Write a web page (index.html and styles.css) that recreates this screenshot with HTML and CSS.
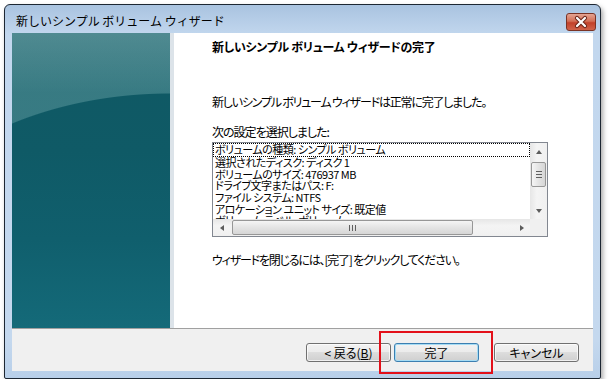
FILE: index.html
```html
<!DOCTYPE html>
<html lang="ja">
<head>
    <meta charset="UTF-8">
    <meta name="viewport" content="width=device-width, initial-scale=1.0">
    <title>新しいシンプル ボリューム ウィザード</title>
    <link rel="stylesheet" href="styles.css">
</head>
<body>
    <div class="window">
        <div class="titlebar">
            <span class="title">新しいシンプル ボリューム ウィザード</span>
            <div class="close">
                <svg width="28" height="16" viewBox="0 0 28 16">
                    <path d="M10 4 L18 12 M18 4 L10 12" stroke="#6b2418" stroke-width="4.2" stroke-linecap="round"/>
                    <path d="M10 4 L18 12 M18 4 L10 12" stroke="#fff" stroke-width="2.2" stroke-linecap="round"/>
                </svg>
            </div>
        </div>

        <div class="client">
            <div class="main">
                <div class="banner"></div>
                <div class="content">
                    <h1 class="heading">新しいシンプル ボリューム ウィザードの完了</h1>
                    <p class="done">新しいシンプル ボリューム ウィザードは正常に完了しました。</p>
                    <p class="label">次の設定を選択しました:</p>

                    <div class="listbox">
                        <div class="items">
                            <div class="item focus">ボリュームの種類: シンプル ボリューム</div>
                            <div class="item">選択されたディスク: ディスク 1</div>
                            <div class="item">ボリュームのサイズ: 476937 MB</div>
                            <div class="item">ドライブ文字またはパス: F:</div>
                            <div class="item">ファイル システム: NTFS</div>
                            <div class="item">アロケーション ユニット サイズ: 既定値</div>
                            <div class="item">ボリューム ラベル: ボリューム</div>
                        </div>
                        <div class="vscroll">
                            <div class="sb-btn"><span class="arrow up"></span></div>
                            <div class="sb-track"><div class="thumb v"></div></div>
                            <div class="sb-btn"><span class="arrow down"></span></div>
                        </div>
                        <div class="hscroll">
                            <div class="sb-btn"><span class="arrow left"></span></div>
                            <div class="sb-track"><div class="thumb h"></div></div>
                            <div class="sb-btn"><span class="arrow right"></span></div>
                        </div>
                        <div class="corner"></div>
                    </div>

                    <p class="hint">ウィザードを閉じるには、[完了] をクリックしてください。</p>
                </div>
            </div>

            <div class="footer">
                <button class="btn">&lt; 戻る(<u>B</u>)</button>
                <button class="btn default">完了</button>
                <button class="btn cancel">キャンセル</button>
            </div>
        </div>

        <div class="mark"></div>
    </div>
</body>
</html>
```

FILE: styles.css
```css
body {
    margin: 0;
    background: #fff;
    font-family: "Noto Sans CJK JP", "Noto Sans", sans-serif;
    font-size: 12px;
    color: #000;
}
p, h1 {
    margin: 0;
}
.window {
    position: relative;
    margin: 4px 0 0 4px;
    width: 597px;
    height: 375px;
    box-sizing: border-box;
    border: 1px solid #1d2733;
    border-radius: 6px 6px 2px 2px;
    padding: 0 7px 7px;
    background: linear-gradient(#a9c3e0, #c2d7ee 30px, #c4d8ee 90%, #b8cfe9);
    box-shadow: 2px 3px 5px rgba(0,0,0,0.35);
    display: flex;
    flex-direction: column;
}
.titlebar {
    height: 28px;
    display: flex;
    align-items: flex-start;
}
.title {
    padding: 7px 0 0 4px;
    font-size: 12px;
    line-height: 18px;
}
.close {
    margin: 8px -3px 0 auto;
    width: 30px;
    height: 18px;
    box-sizing: border-box;
    border: 1px solid #7a3325;
    border-radius: 3px;
    background: linear-gradient(#e5a493, #d36f56 45%, #c2412a 55%, #d0634a);
    display: flex;
    align-items: center;
    justify-content: center;
}
.client {
    flex: 1;
    display: flex;
    flex-direction: column;
    background: #f0f0f0;
}
.main {
    height: 295px;
    display: flex;
    background: #fff;
    border-bottom: 1px solid #a0a0a0;
}
.banner {
    width: 158px;
    border-right: 4px solid #dce3e9;
    background:
        radial-gradient(300px 200px at 158px 260px, transparent 99.5%, rgba(150,200,200,0.3) 100%),
        linear-gradient(rgba(255,255,255,0.14), rgba(255,255,255,0) 60px),
        linear-gradient(#0f5863, #0f5a66 40%, #105f6d 70%, #146a79);
}
.content {
    flex: 1;
    padding: 5px 0 0 38px;
    font-feature-settings: "palt";
    letter-spacing: -1.2px;
}
.heading {
    font-size: 12px;
    font-weight: bold;
    line-height: 18px;
    letter-spacing: -0.3px;
}
.done {
    margin-top: 37px;
    line-height: 18px;
}
.label {
    margin-top: 12px;
    line-height: 18px;
    letter-spacing: -1px;
}
.listbox {
    margin-top: 1px;
    width: 336px;
    height: 95px;
    box-sizing: border-box;
    border: 1px solid #828790;
    display: grid;
    grid-template-columns: 1fr 17px;
    grid-template-rows: 1fr 17px;
    background: #fff;
}
.items {
    overflow: hidden;
}
.item {
    height: 11.7px;
    line-height: 11.7px;
    padding-left: 2px;
    font-size: 11px;
    letter-spacing: -0.5px;
    white-space: nowrap;
}
.item.focus {
    height: 12px;
    border: 1px dotted #000;
    padding-left: 1px;
}
.vscroll {
    display: flex;
    flex-direction: column;
    background: linear-gradient(to right, #e6e6e6, #f4f4f4 40%, #f0f0f0);
}
.hscroll {
    display: flex;
    background: linear-gradient(#e6e6e6, #f4f4f4 40%, #f0f0f0);
}
.sb-btn {
    width: 17px;
    height: 17px;
    flex: none;
    display: flex;
    align-items: center;
    justify-content: center;
}
.sb-track {
    flex: 1;
}
.vscroll .sb-track {
    padding: 2px 1px 0;
}
.hscroll .sb-track {
    padding: 1px 0 0 2px;
}
.corner {
    background: #f0f0f0;
}
.arrow {
    width: 0;
    height: 0;
    border: 3.5px solid transparent;
}
.arrow.up {
    border-bottom: 4px solid #5c5c5c;
    border-top-width: 0;
}
.arrow.down {
    border-top: 4px solid #5c5c5c;
    border-bottom-width: 0;
}
.arrow.left {
    border-right: 4px solid #5c5c5c;
    border-left-width: 0;
}
.arrow.right {
    border-left: 4px solid #5c5c5c;
    border-right-width: 0;
}
.thumb {
    box-sizing: border-box;
    border: 1px solid #979797;
    border-radius: 2px;
    display: flex;
    align-items: center;
    justify-content: center;
}
.thumb.v {
    height: 25px;
    background: linear-gradient(to right, #f5f5f5, #e4e4e4 50%, #d6d6d6);
}
.thumb.v::after {
    content: "";
    width: 6px;
    height: 7px;
    background: repeating-linear-gradient(#606060 0 1px, transparent 1px 3px);
}
.thumb.h {
    width: 241px;
    height: 15px;
    background: linear-gradient(#f5f5f5, #e4e4e4 50%, #d6d6d6);
}
.thumb.h::after {
    content: "";
    width: 7px;
    height: 6px;
    background: repeating-linear-gradient(to right, #606060 0 1px, transparent 1px 3px);
}
.hint {
    margin-top: 14px;
    line-height: 18px;
}
.footer {
    flex: 1;
    display: flex;
    justify-content: flex-end;
    align-items: flex-start;
    padding: 14px 14px 0 0;
}
.btn {
    width: 85px;
    height: 19px;
    margin: 0;
    padding: 0;
    box-sizing: border-box;
    border: 1px solid #707070;
    border-radius: 3px;
    background: linear-gradient(#f2f2f2, #ebebeb 50%, #dddddd 50%, #cfcfcf);
    box-shadow: inset 0 0 0 1px rgba(255,255,255,0.7);
    font-family: "Noto Sans CJK JP", "Noto Sans", sans-serif;
    font-size: 12px;
    line-height: 16px;
    font-feature-settings: "palt";
    color: #000;
}
.btn.default {
    margin-left: 3px;
    border-color: #3c7fb1;
    box-shadow: inset 0 0 0 1px #a6dcf4;
}
.btn.cancel {
    margin-left: 15px;
}
.mark {
    position: absolute;
    left: 374px;
    top: 326px;
    width: 114px;
    height: 43px;
    box-sizing: border-box;
    border: 2px solid #e3101a;
}
```
